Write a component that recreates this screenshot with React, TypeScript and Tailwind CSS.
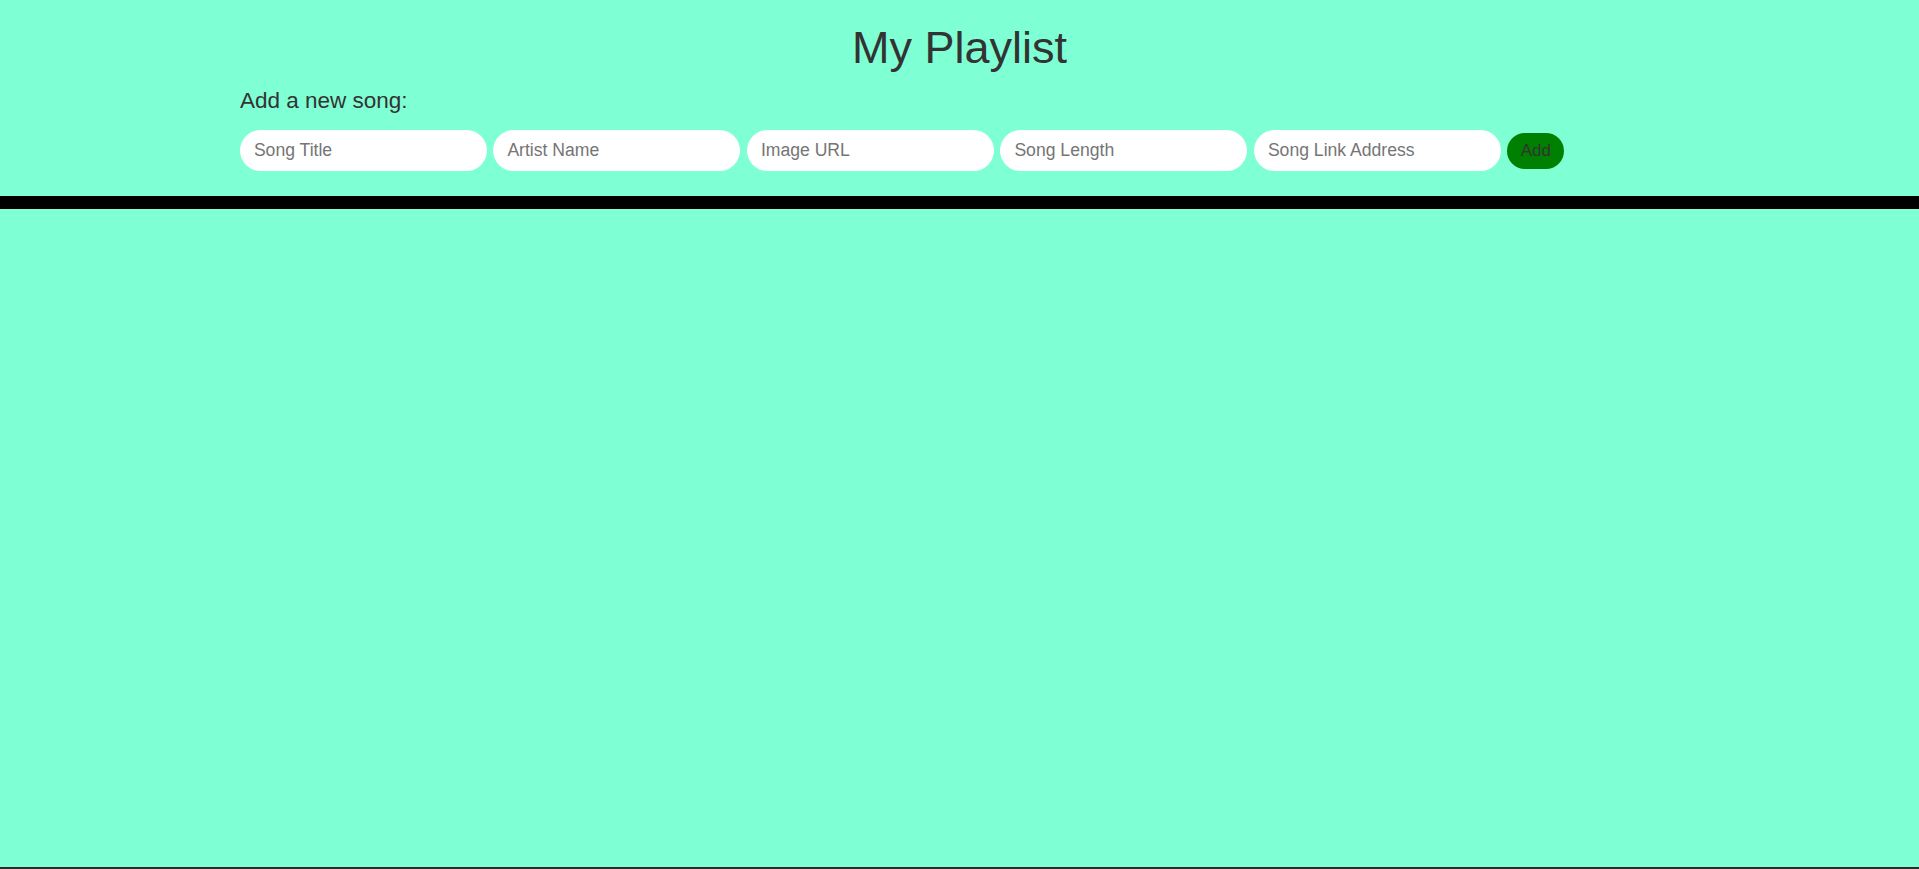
import React, { useState } from 'react';

interface Song {
  title: string;
  artist: string;
  image: string;
  length: string;
  link: string;
}

const fields: { key: keyof Song; placeholder: string }[] = [
  { key: 'title', placeholder: 'Song Title' },
  { key: 'artist', placeholder: 'Artist Name' },
  { key: 'image', placeholder: 'Image URL' },
  { key: 'length', placeholder: 'Song Length' },
  { key: 'link', placeholder: 'Song Link Address' },
];

const emptySong: Song = { title: '', artist: '', image: '', length: '', link: '' };

export default function App() {
  const [form, setForm] = useState<Song>(emptySong);
  const [songs, setSongs] = useState<Song[]>([]);

  const handleAdd = () => {
    if (!form.title) return;
    setSongs([...songs, form]);
    setForm(emptySong);
  };

  return (
    <div
      className="h-screen flex flex-col bg-[#7fffd4] text-[#333333]"
      style={{ fontFamily: '"Liberation Sans", Arial, sans-serif' }}
    >
      <div className="w-3/4 mx-auto pt-[23px]">
        <h1 className="text-center text-[45px] leading-[50px] font-normal">My Playlist</h1>
        <h3 className="mt-[15px] text-[22.5px] leading-[26px] font-normal">Add a new song:</h3>
        <div className="mt-4 flex items-center gap-[6.5px]">
          {fields.map((f) => (
            <input
              key={f.key}
              type="text"
              value={form[f.key]}
              onChange={(e) => setForm({ ...form, [f.key]: e.target.value })}
              placeholder={f.placeholder}
              className="w-[247px] h-[41px] rounded-full bg-white px-[14px] text-[17.6px] outline-none placeholder:text-[#757575]"
            />
          ))}
          <button
            onClick={handleAdd}
            className="w-[57px] h-[36px] rounded-full bg-[#008000] text-[17px] text-[#333333]"
          >
            Add
          </button>
        </div>
      </div>

      <div className="mt-[25px] h-[13px] bg-black" />

      <div className="flex-1">
        {songs.map((s, i) => (
          <div key={i} className="w-3/4 mx-auto py-2 text-lg">
            {s.title} - {s.artist}
          </div>
        ))}
      </div>

      <div className="h-[2px] bg-[#2a2a2a]" />
    </div>
  );
}
